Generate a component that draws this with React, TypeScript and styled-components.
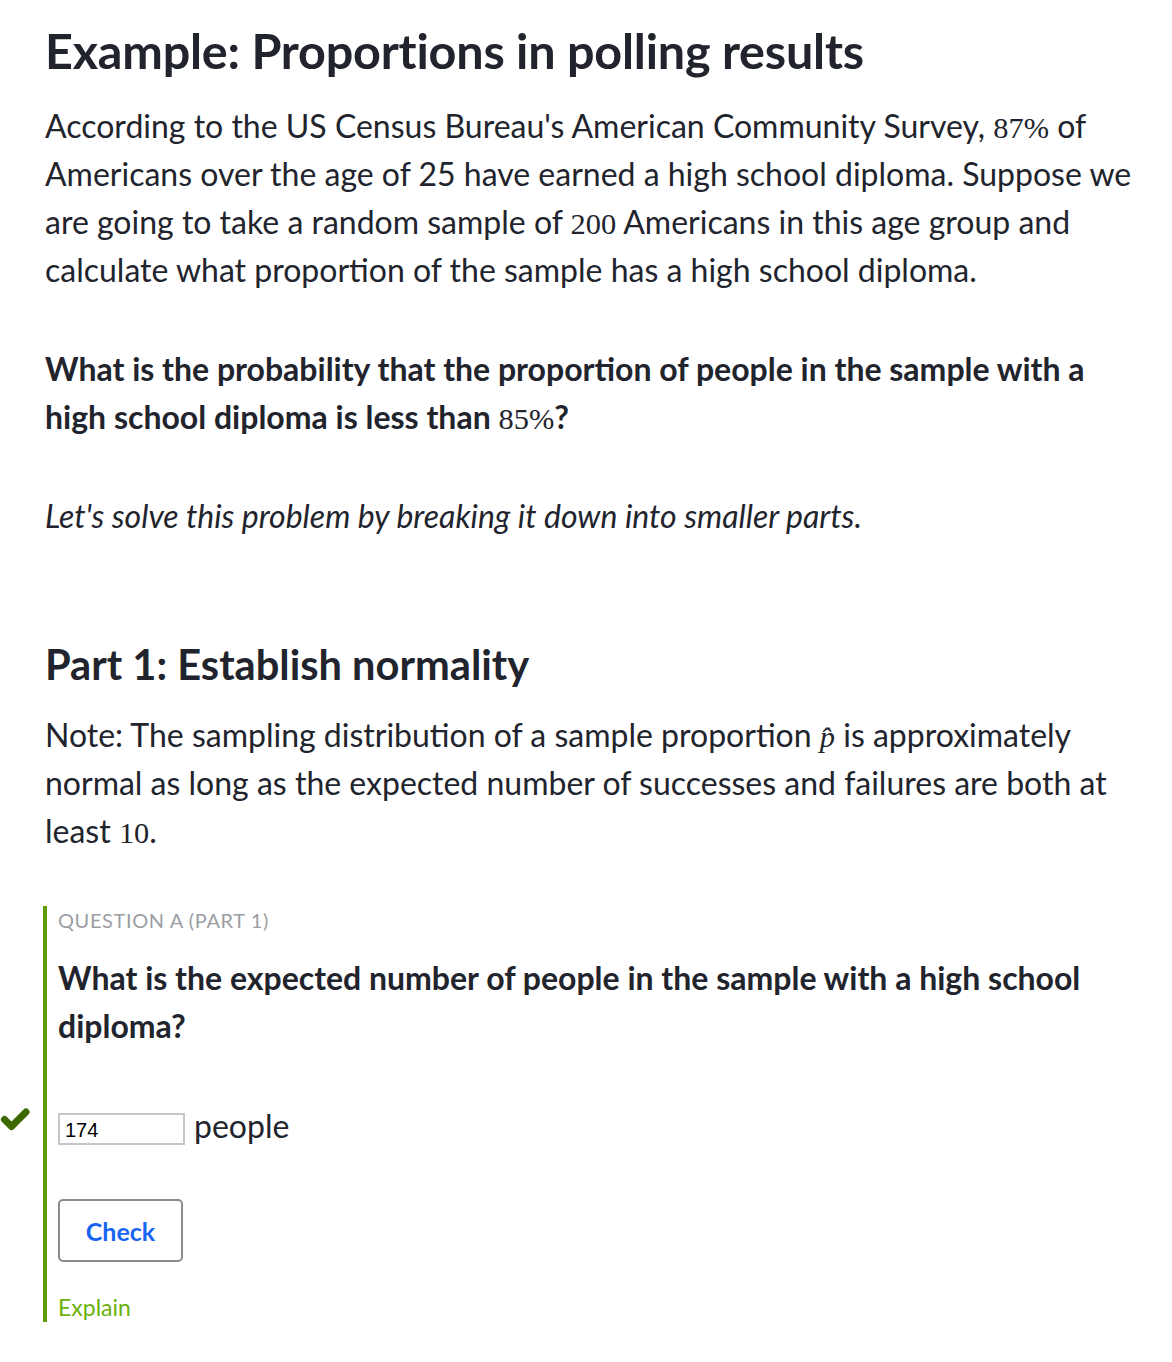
import React from "react";
import styled, { createGlobalStyle } from "styled-components";

const colors = {
  text: "#21242c",
  muted: "#9b9ea3",
  green: "#5f9b06",
  darkGreen: "#3d6a00",
  lightGreen: "#6bb00b",
  blue: "#1865f2",
  border: "#c6c6c6",
};

const GlobalStyle = createGlobalStyle`
  body {
    margin: 0;
    background: #ffffff;
    color: ${colors.text};
    font-family: Lato, "Noto Sans", sans-serif;
  }
`;

const Page = styled.div`
  width: 1172px;
  box-sizing: border-box;
  padding: 18px 30px 40px 45px;
`;

const Title = styled.h1`
  margin: 0 0 20px;
  font-size: 48.5px;
  line-height: 64px;
  font-weight: 700;
  letter-spacing: -0.2px;
`;

const Paragraph = styled.p<{ $bold?: boolean; $italic?: boolean; $last?: boolean }>`
  margin: 0 0 ${(p) => (p.$last ? 0 : 51)}px;
  font-size: 32px;
  line-height: 48px;
  font-weight: ${(p) => (p.$bold ? 700 : 400)};
  font-style: ${(p) => (p.$italic ? "italic" : "normal")};
`;

const Math = styled.span`
  font-family: "Liberation Serif", "DejaVu Serif", serif;
  font-weight: 400;
  font-style: normal;
  font-size: 0.95em;
  line-height: 1;
`;

const MathVar = styled(Math)`
  font-style: italic;
`;

const Heading = styled.h2`
  margin: 99px 0 22px;
  font-size: 41.6px;
  line-height: 50px;
  font-weight: 700;
`;

const Question = styled.section`
  position: relative;
  margin: 51px 0 0 -2px;
  border-left: 4px solid ${colors.green};
  padding: 2px 0 2px 11px;
`;

const Label = styled.div`
  font-size: 20px;
  line-height: 24px;
  letter-spacing: 0.6px;
  color: ${colors.muted};
  text-transform: uppercase;
`;

const Prompt = styled.p`
  margin: 22px 0 0;
  font-size: 32px;
  line-height: 48px;
  font-weight: 700;
`;

const AnswerRow = styled.div`
  position: relative;
  display: flex;
  align-items: center;
  gap: 9px;
  margin-top: 63px;
  font-size: 32px;
  line-height: 36px;
`;

const Input = styled.input`
  box-sizing: border-box;
  width: 127px;
  height: 32px;
  margin: 0;
  padding: 2px 5px 0;
  border: 2px solid ${colors.border};
  border-radius: 0;
  font-family: "Liberation Sans", Arial, sans-serif;
  font-size: 20px;
  color: #000;
  outline: none;
`;

const Unit = styled.span`
  margin-top: -6px;
`;

const CheckMark = styled.svg`
  position: absolute;
  left: -58px;
  top: -6px;
`;

const Button = styled.button`
  display: block;
  box-sizing: border-box;
  width: 125px;
  height: 63px;
  margin-top: 54px;
  border: 2px solid #8a8b90;
  border-radius: 5px;
  background: #fff;
  color: ${colors.blue};
  font-family: Lato, sans-serif;
  font-size: 25px;
  font-weight: 700;
  cursor: pointer;
`;

const Explain = styled.a`
  display: block;
  margin-top: 32px;
  font-size: 23px;
  line-height: 26px;
  color: ${colors.lightGreen};
  text-decoration: none;
`;

const App = () => (
  <>
    <GlobalStyle />
    <Page>
      <Title>Example: Proportions in polling results</Title>
      <Paragraph>
        According to the US Census Bureau's American Community Survey,{" "}
        <Math>87%</Math> of Americans over the age of 25 have earned a high
        school diploma. Suppose we are going to take a random sample of{" "}
        <Math>200</Math> Americans in this age group and calculate what
        proportion of the sample has a high school diploma.
      </Paragraph>
      <Paragraph $bold>
        What is the probability that the proportion of people in the sample
        with a high school diploma is less than <Math>85%</Math>?
      </Paragraph>
      <Paragraph $italic>
        Let's solve this problem by breaking it down into smaller parts.
      </Paragraph>

      <Heading>Part 1: Establish normality</Heading>
      <Paragraph $last>
        Note: The sampling distribution of a sample proportion{" "}
        <MathVar>p&#770;</MathVar> is approximately normal as long as the
        expected number of successes and failures are both at least{" "}
        <Math>10</Math>.
      </Paragraph>

      <Question>
        <Label>Question A (Part 1)</Label>
        <Prompt>
          What is the expected number of people in the sample with a high
          school diploma?
        </Prompt>
        <AnswerRow>
          <CheckMark width="30" height="24" viewBox="0 0 30 24">
            <path
              d="M4.5 12.5 L11.5 19.5 L26 5"
              fill="none"
              stroke={colors.darkGreen}
              strokeWidth="7"
              strokeLinecap="round"
              strokeLinejoin="round"
            />
          </CheckMark>
          <Input defaultValue="174" />
          <Unit>people</Unit>
        </AnswerRow>
        <Button>Check</Button>
        <Explain href="#">Explain</Explain>
      </Question>
    </Page>
  </>
);

export default App;
